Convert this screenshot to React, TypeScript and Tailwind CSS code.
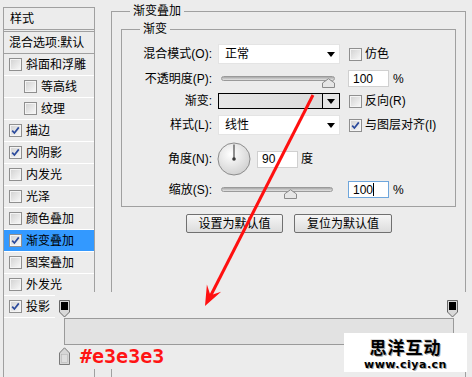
import React from 'react';

const styleItems = [
  { label: '斜面和浮雕' },
  { label: '等高线', indent: true },
  { label: '纹理', indent: true },
  { label: '描边', on: true },
  { label: '内阴影', on: true },
  { label: '内发光' },
  { label: '光泽' },
  { label: '颜色叠加' },
  { label: '渐变叠加', on: true, active: true },
  { label: '图案叠加' },
  { label: '外发光' },
  { label: '投影', on: true },
];

const Check = ({ on }: { on?: boolean }) => (
  <span className="flex w-[13px] h-[13px] shrink-0 border border-[#8f8f8f] bg-[#f4f4f4] p-px">
    <span className="flex w-full h-full items-center justify-center bg-linear-to-br from-[#d4d4d4] to-[#f6f6f6]">
      {on && (
        <svg width="9" height="9" viewBox="0 0 9 9">
          <path d="M1.2 4.6 L3.4 7 L7.8 1.4" fill="none" stroke="#2b4a9c" strokeWidth="1.7" />
        </svg>
      )}
    </span>
  </span>
);

const Caret = () => (
  <svg width="8" height="5" viewBox="0 0 8 5">
    <path d="M0 0 H8 L4 5 Z" fill="#000" />
  </svg>
);

const Thumb = () => (
  <svg width="13" height="10" viewBox="0 0 13 10">
    <path d="M0.5 9.5 V5 L6.5 0.7 L12.5 5 V9.5 Z" fill="#e6e6e6" stroke="#8a8a8a" />
  </svg>
);

const Track = ({ thumbLeft, width }: { thumbLeft: string; width: string }) => (
  <div className={`relative h-full ${width}`}>
    <div className="absolute left-[3px] right-0 top-[6px] h-[5px] rounded-full border border-[#9a9a9a] bg-linear-to-b from-[#a8a8a8] to-[#e4e4e4]" />
    <div className={`absolute top-[8px] ${thumbLeft}`}>
      <Thumb />
    </div>
  </div>
);

const Label = ({ children }: { children: React.ReactNode }) => (
  <span className="w-[90px] mr-[6px] text-right shrink-0">{children}</span>
);

const Field = ({ value, focused }: { value: string; focused?: boolean }) => (
  <div
    className={`w-[41px] h-[17px] bg-white border flex items-center pl-[4px] ${
      focused ? 'border-[#6ea6dc]' : 'border-[#d0d0d0]'
    }`}
  >
    {value}
    {focused && <span className="w-px h-[13px] bg-black" />}
  </div>
);

const Select = ({ value }: { value: string }) => (
  <div className="w-[122px] h-[20px] bg-white border border-[#e4e4e4] flex items-center justify-between pl-[6px] pr-[4px]">
    <span>{value}</span>
    <Caret />
  </div>
);

const Stop = ({ down }: { down?: boolean }) =>
  down ? (
    <svg width="11" height="18" viewBox="0 0 11 18">
      <path d="M0.5 0.5 H10.5 V12 L5.5 17 L0.5 12 Z" fill="#d8d8d8" stroke="#666" />
      <rect x="2" y="2" width="7" height="8" fill="#000" />
    </svg>
  ) : (
    <svg width="11" height="18" viewBox="0 0 11 18">
      <path d="M0.5 17.5 H10.5 V6 L5.5 0.8 L0.5 6 Z" fill="#d6d6d6" stroke="#7a7a7a" />
      <rect x="2.5" y="7.5" width="6" height="8" fill="#dedede" stroke="#b0b0b0" strokeWidth="0.5" />
    </svg>
  );

export default function App() {
  return (
    <div className="relative w-[472px] h-[377px] overflow-hidden bg-[#ececec] text-[12px] leading-[14px] text-black font-['Liberation_Sans','Noto_Sans_CJK_SC',sans-serif]">
      <div className="flex">
        {/* style list */}
        <div className="ml-[3px] mt-[7px] w-[92px] h-[400px] shrink-0 border-l border-r border-t border-[#a0a0a0]">
          <div className="h-[22px] border-b border-[#a0a0a0] flex items-center pl-[6px]">样式</div>
          <div className="mt-px h-[23px] border-t border-b border-[#a0a0a0] flex items-center pl-[5px]">混合选项:默认</div>
          {styleItems.map((it) => (
            <div
              key={it.label}
              className={`h-[22px] border-b border-white flex items-center gap-[4px] ${
                it.indent ? 'pl-[20px]' : 'pl-[5px]'
              } ${it.active ? 'bg-[#3399ff]' : ''}`}
            >
              <Check on={it.on} />
              <span>{it.label}</span>
            </div>
          ))}
        </div>

        {/* gradient overlay panel */}
        <fieldset className="ml-[16px] mt-[5px] w-[355px] h-[400px] shrink-0 border border-[#a0a0a0]">
          <legend className="ml-[18px] px-[3px] leading-[12px]">渐变叠加</legend>

          <fieldset className="mx-[9px] mt-[6px] border border-[#a0a0a0] pt-[9px] pb-[8px]">
            <legend className="ml-[18px] px-[3px] leading-[12px]">渐变</legend>

            <div className="flex items-center h-[20px]">
              <Label>混合模式(O):</Label>
              <Select value="正常" />
              <span className="ml-[9px] flex"><Check /></span>
              <span className="ml-[3px]">仿色</span>
            </div>

            <div className="flex items-center h-[17px] mt-[6px]">
              <Label>不透明度(P):</Label>
              <Track width="w-[117px]" thumbLeft="left-[104px]" />
              <span className="ml-[13px] flex"><Field value="100" /></span>
              <span className="ml-[4px]">%</span>
            </div>

            <div className="flex items-center h-[16px] mt-[6px]">
              <Label>渐变:</Label>
              <div className="w-[122px] h-[16px] border border-black flex bg-linear-to-r from-[#e6e6e6] to-[#dadada]">
                <div className="flex-1" />
                <div className="w-[17px] border-l border-black bg-[#e4e4e4] flex items-center justify-center">
                  <Caret />
                </div>
              </div>
              <span className="ml-[9px] flex"><Check /></span>
              <span className="ml-[3px]">反向(R)</span>
            </div>

            <div className="flex items-center h-[20px] mt-[6px]">
              <Label>样式(L):</Label>
              <Select value="线性" />
              <span className="ml-[9px] flex"><Check on /></span>
              <span className="ml-[3px]">与图层对齐(I)</span>
            </div>

            <div className="flex items-center h-[34px] mt-[7px]">
              <Label>角度(N):</Label>
              <svg width="34" height="34" viewBox="0 0 34 34" className="-ml-px">
                <defs>
                  <radialGradient id="dial" cx="40%" cy="35%" r="70%">
                    <stop offset="0%" stopColor="#ffffff" />
                    <stop offset="100%" stopColor="#cfcfcf" />
                  </radialGradient>
                </defs>
                <circle cx="17" cy="17" r="16" fill="url(#dial)" stroke="#8c8c8c" />
                <line x1="17" y1="17" x2="17" y2="2.5" stroke="#4a4a4a" strokeWidth="1.2" />
                <circle cx="17" cy="17" r="1.8" fill="#3a3a3a" />
              </svg>
              <span className="ml-[6px] flex"><Field value="90" /></span>
              <span className="ml-[3px]">度</span>
            </div>

            <div className="flex items-center h-[17px] mt-[5px]">
              <Label>缩放(S):</Label>
              <Track width="w-[115px]" thumbLeft="left-[66px]" />
              <span className="ml-[15px] flex"><Field value="100" focused /></span>
              <span className="ml-[4px]">%</span>
            </div>
          </fieldset>

          <div className="flex gap-[11px] ml-[74px] mt-[7px]">
            <button className="w-[97px] h-[19px] rounded-[2px] border border-[#707070] bg-linear-to-b from-[#f6f6f6] to-[#dcdcdc]">设置为默认值</button>
            <button className="w-[98px] h-[19px] rounded-[2px] border border-[#707070] bg-linear-to-b from-[#f6f6f6] to-[#dcdcdc]">复位为默认值</button>
          </div>
        </fieldset>
      </div>

      {/* pasted gradient editor strip */}
      <div className="absolute left-[55px] top-[292px] w-[417px] h-[77px] bg-[#ececec] flex flex-col">
        <div className="ml-[4px] mt-[8px] w-[399px] flex justify-between">
          <Stop down />
          <Stop down />
        </div>
        <div className="ml-[9px] w-[390px] h-[27px] border border-[#9a9a9a] bg-[#e2e2e2]" />
        <div className="ml-[4px] mt-[2px] flex items-start">
          <Stop />
          <span className="ml-[10px] -mt-[1px] text-[20px] leading-[20px] font-bold text-[#ff1414] font-['DejaVu_Sans_Mono',monospace]">#e3e3e3</span>
        </div>
      </div>

      {/* watermark */}
      <div className="absolute left-[344px] top-[333px] w-[123px] h-[39px] bg-white flex flex-col items-center pt-[7px]">
        <span className="text-[17px] leading-[17px] font-bold tracking-[1px] text-black [text-shadow:1px_1px_0_#aaa,-1px_-1px_0_#ddd]">思洋互动</span>
        <span className="mt-[2px] text-[11px] leading-[11px] font-black tracking-[0.5px] text-black font-['DejaVu_Sans',sans-serif] [text-shadow:1px_1px_0_#aaa]">www.ciya.cn</span>
      </div>

      {/* red arrow */}
      <svg className="absolute inset-0 pointer-events-none" width="472" height="377" viewBox="0 0 472 377">
        <line x1="313" y1="95" x2="210" y2="297" stroke="#ff1010" strokeWidth="3" />
        <path d="M205 306 L206.9 284.6 L210.4 295.3 L221.1 291.8 Z" fill="#ff1010" />
      </svg>
    </div>
  );
}
